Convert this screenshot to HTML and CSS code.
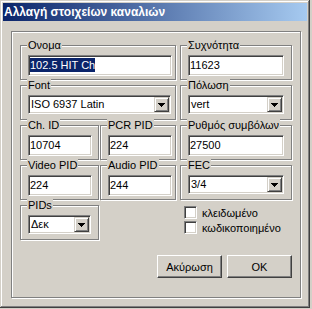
FILE: index.html
```html
<!DOCTYPE html>
<html lang="el">
<head>
<meta charset="UTF-8">
<title>Αλλαγή στοιχείων καναλιών</title>
<link rel="stylesheet" href="styles.css">
</head>
<body>
<div class="window">
    <div class="titlebar">Αλλαγή στοιχείων καναλιών</div>
    <div class="client">
        <div class="frame">
            <div class="rows">
                <div class="row">
                    <div class="group g-wide">
                        <span class="caption">Ονομα</span>
                        <div class="field w-name"><span class="sel">102.5 HIT Ch</span></div>
                    </div>
                    <div class="group g-c">
                        <span class="caption">Συχνότητα</span>
                        <div class="field w-c">11623</div>
                    </div>
                </div>
                <div class="row">
                    <div class="group g-wide">
                        <span class="caption">Font</span>
                        <div class="combo w-font">
                            <span>ISO 6937 Latin</span>
                            <span class="drop"><svg width="7" height="4" viewBox="0 0 7 4"><path d="M0 0h7v1H0z M1 1h5v1H1z M2 2h3v1H2z M3 3h1v1H3z" fill="#000"/></svg></span>
                        </div>
                    </div>
                    <div class="group g-c">
                        <span class="caption">Πόλωση</span>
                        <div class="combo w-c">
                            <span>vert</span>
                            <span class="drop"><svg width="7" height="4" viewBox="0 0 7 4"><path d="M0 0h7v1H0z M1 1h5v1H1z M2 2h3v1H2z M3 3h1v1H3z" fill="#000"/></svg></span>
                        </div>
                    </div>
                </div>
                <div class="row">
                    <div class="pair">
                        <div class="group g-a">
                            <span class="caption">Ch. ID</span>
                            <div class="field w-small">10704</div>
                        </div>
                        <div class="group g-b">
                            <span class="caption">PCR PID</span>
                            <div class="field w-small">224</div>
                        </div>
                    </div>
                    <div class="group g-c">
                        <span class="caption">Ρυθμός συμβόλων</span>
                        <div class="field w-c">27500</div>
                    </div>
                </div>
                <div class="row">
                    <div class="pair">
                        <div class="group g-a">
                            <span class="caption">Video PID</span>
                            <div class="field w-small">224</div>
                        </div>
                        <div class="group g-b">
                            <span class="caption">Audio PID</span>
                            <div class="field w-small">244</div>
                        </div>
                    </div>
                    <div class="group g-c">
                        <span class="caption">FEC</span>
                        <div class="combo w-c">
                            <span>3/4</span>
                            <span class="drop"><svg width="7" height="4" viewBox="0 0 7 4"><path d="M0 0h7v1H0z M1 1h5v1H1z M2 2h3v1H2z M3 3h1v1H3z" fill="#000"/></svg></span>
                        </div>
                    </div>
                </div>
                <div class="row">
                    <div class="pair">
                        <div class="group g-a">
                            <span class="caption">PIDs</span>
                            <div class="combo w-pids">
                                <span>Δεκ</span>
                                <span class="drop"><svg width="7" height="4" viewBox="0 0 7 4"><path d="M0 0h7v1H0z M1 1h5v1H1z M2 2h3v1H2z M3 3h1v1H3z" fill="#000"/></svg></span>
                            </div>
                        </div>
                    </div>
                    <div class="checks">
                        <div class="check"><span class="box"></span>κλειδωμένο</div>
                        <div class="check"><span class="box"></span>κωδικοποιημένο</div>
                    </div>
                </div>
            </div>
            <div class="buttons">
                <div class="btn">Ακύρωση</div>
                <div class="btn">OK</div>
            </div>
        </div>
    </div>
</div>
</body>
</html>
```

FILE: styles.css
```css
body {
    margin: 0;
    background-color: #d4d0c8;
    font-family: "Liberation Sans", Arial, sans-serif;
    font-size: 11px;
    color: #000;
}

.window {
    width: 310px;
    height: 308px;
    box-sizing: border-box;
    padding: 3px;
    background-color: #d4d0c8;
    box-shadow: inset -1px -1px #404040, inset 1px 1px #d4d0c8,
                inset -2px -2px #808080, inset 2px 2px #fff;
}

.titlebar {
    height: 18px;
    padding-left: 1px;
    background: linear-gradient(to right, #0a246a, #a6caf0);
    color: #fff;
    font-weight: bold;
    font-size: 12px;
    line-height: 18px;
}

.client {
    padding: 10px 0 0 8px;
}

.frame {
    width: 290px;
    height: 267px;
    box-sizing: border-box;
    padding: 13px 0 0 8px;
    border: 1px solid #808080;
    box-shadow: inset 1px 1px #fff, 1px 1px #fff;
}

.rows {
    display: flex;
    flex-direction: column;
    gap: 5px;
}

.row {
    display: flex;
    gap: 4px;
    height: 35px;
}

.pair {
    display: flex;
    gap: 1px;
    width: 156px;
}

.group {
    position: relative;
    box-sizing: border-box;
    height: 35px;
    padding: 9px 0 0 7px;
    border: 1px solid #808080;
    box-shadow: inset 1px 1px #fff, 1px 1px #fff;
}

.g-wide { width: 156px; }
.g-a { width: 79px; }
.g-b { width: 76px; }
.g-c { width: 112px; }

.caption {
    position: absolute;
    top: -8px;
    left: 6px;
    padding: 0 1px;
    line-height: 14px;
    background-color: #d4d0c8;
    white-space: nowrap;
}

.field,
.combo {
    box-sizing: border-box;
    background-color: #fff;
    border: 1px solid;
    border-color: #808080 #fff #fff #808080;
    box-shadow: inset 1px 1px #404040, inset -1px -1px #d4d0c8;
}

.field {
    height: 21px;
    padding-left: 1px;
    line-height: 19px;
    white-space: nowrap;
}

.sel {
    display: inline-block;
    line-height: 14px;
    background-color: #0a246a;
    color: #fff;
}

.combo {
    display: flex;
    justify-content: space-between;
    height: 19px;
    padding: 1px 1px 0 2px;
    line-height: 15px;
}

.drop {
    display: flex;
    align-items: center;
    justify-content: center;
    width: 15px;
    height: 15px;
    box-sizing: border-box;
    background-color: #d4d0c8;
    border: 1px solid;
    border-color: #d4d0c8 #404040 #404040 #d4d0c8;
    box-shadow: inset 1px 1px #fff, inset -1px -1px #808080;
}

.w-name { width: 144px; }
.w-font { width: 143px; }
.w-c { width: 96px; }
.w-small { width: 64px; }
.w-pids { width: 63px; }

.checks {
    display: flex;
    flex-direction: column;
    gap: 2px;
    padding: 1px 0 0 4px;
}

.check {
    display: flex;
    align-items: center;
    gap: 5px;
    height: 13px;
}

.box {
    width: 13px;
    height: 13px;
    box-sizing: border-box;
    background-color: #fff;
    border: 1px solid;
    border-color: #808080 #fff #fff #808080;
    box-shadow: inset 1px 1px #404040, inset -1px -1px #d4d0c8;
}

.buttons {
    display: flex;
    justify-content: flex-end;
    gap: 5px;
    width: 272px;
    margin-top: 15px;
}

.btn {
    display: flex;
    align-items: center;
    justify-content: center;
    width: 65px;
    height: 23px;
    box-sizing: border-box;
    border: 1px solid;
    border-color: #fff #404040 #404040 #fff;
    box-shadow: inset -1px -1px #808080;
}
```
